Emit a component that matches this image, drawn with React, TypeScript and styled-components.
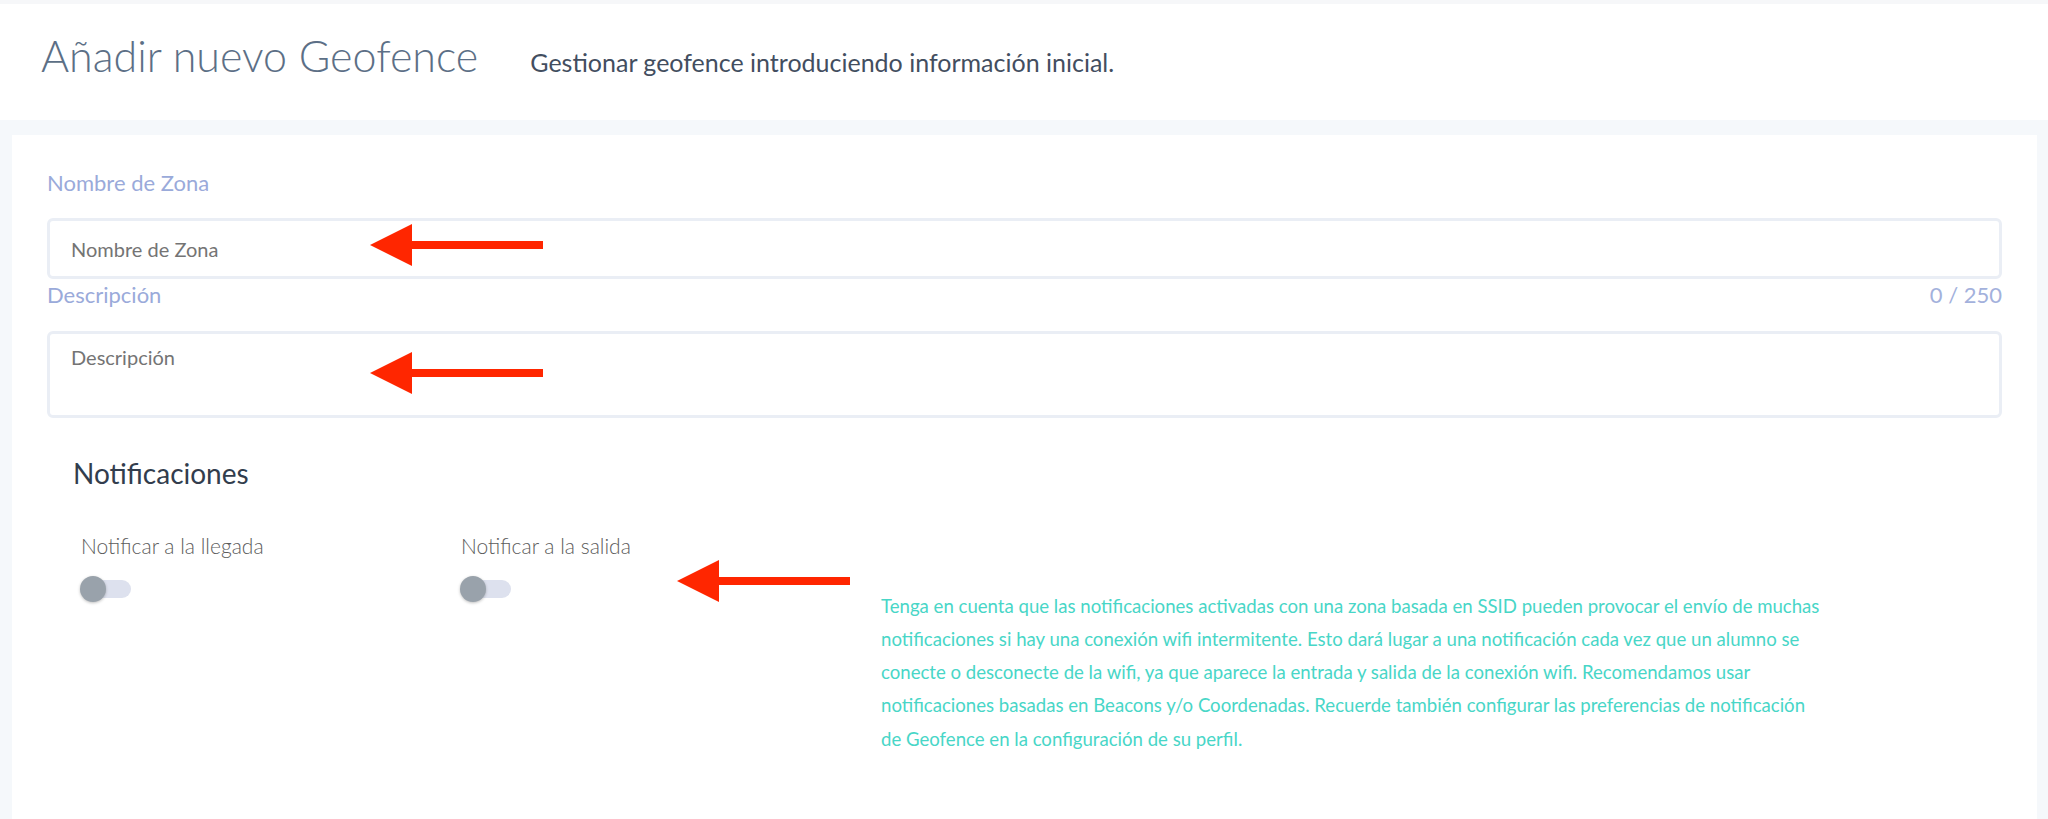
import React from "react";
import styled, { createGlobalStyle } from "styled-components";

const GlobalStyle = createGlobalStyle`
  html, body {
    margin: 0;
    padding: 0;
  }
  body {
    background: #f5f8fb;
    font-family: Lato, "Open Sans", sans-serif;
  }
  * {
    box-sizing: border-box;
  }
`;

const Page = styled.div`
  min-height: 100vh;
  display: flex;
  flex-direction: column;
`;

const Header = styled.header`
  height: 120px;
  border-top: 4px solid #f6f7f9;
  background: #ffffff;
  display: flex;
  align-items: baseline;
  padding: 30px 0 0 41px;
`;

const Title = styled.h1`
  margin: 0;
  font-size: 43px;
  line-height: 1;
  font-weight: 300;
  color: #5c6f86;
`;

const Subtitle = styled.span`
  margin-left: 52px;
  font-size: 25px;
  color: #434e5f;
`;

const Main = styled.main`
  flex: 1;
  display: flex;
  padding: 15px 11px 0 12px;
`;

const Card = styled.section`
  flex: 1;
  background: #ffffff;
  padding: 33px 35px 40px;
`;

const LabelRow = styled.div`
  display: flex;
  justify-content: space-between;
  font-size: 22px;
  line-height: 30px;
  color: #9aaada;
`;

const Counter = styled.span`
  color: #a3b1dc;
`;

const FieldBox = styled.div<{ $gap: number }>`
  position: relative;
  margin-top: ${(p) => p.$gap}px;
`;

const TextInput = styled.input`
  display: block;
  width: 100%;
  height: 61px;
  border: 3px solid #eaeef5;
  border-radius: 6px;
  padding: 0 21px;
  font-family: inherit;
  font-size: 20px;
  color: #444;
  outline: none;
  &::placeholder {
    color: #747474;
  }
`;

const TextArea = styled.textarea`
  display: block;
  width: 100%;
  height: 87px;
  border: 3px solid #eaeef5;
  border-radius: 6px;
  padding: 11px 21px;
  font-family: inherit;
  font-size: 20px;
  line-height: 1.2;
  color: #444;
  resize: none;
  outline: none;
  &::placeholder {
    color: #747474;
  }
`;

const SectionTitle = styled.h3`
  margin: 39px 0 0 26px;
  font-size: 28px;
  line-height: 1.2;
  font-weight: 400;
  color: #323d4d;
`;

const NotifyGrid = styled.div`
  position: relative;
  display: grid;
  grid-template-columns: 380px 420px 1fr;
  margin: 42px 0 0 34px;
`;

const Toggle = styled.div`
  display: flex;
  flex-direction: column;
  align-items: flex-start;
  gap: 18px;
`;

const ToggleLabel = styled.span`
  font-size: 21px;
  line-height: 1.2;
  font-weight: 300;
  color: #5c5c5c;
`;

const Track = styled.span`
  position: relative;
  display: block;
  width: 50px;
  height: 26px;
  &::before {
    content: "";
    position: absolute;
    left: 1px;
    right: 0;
    top: 4px;
    height: 18px;
    border-radius: 9px;
    background: #dde1ee;
  }
`;

const Thumb = styled.span`
  position: absolute;
  left: -1px;
  top: 0;
  width: 26px;
  height: 26px;
  border-radius: 50%;
  background: #99a2ab;
  box-shadow: 0 1px 3px rgba(0, 0, 0, 0.25);
`;

const Note = styled.p`
  margin: 57px 0 0;
  max-width: 1120px;
  font-size: 18.6px;
  line-height: 33.3px;
  color: #48d6c7;
`;

const ArrowMark = styled.svg<{ $left: number; $top: number }>`
  position: absolute;
  left: ${(p) => p.$left}px;
  top: ${(p) => p.$top}px;
  pointer-events: none;
`;

const Arrow = ({ left, top }: { left: number; top: number }) => (
  <ArrowMark $left={left} $top={top} width="173" height="42" viewBox="0 0 173 42">
    <polygon points="0,21 42,0 42,42" fill="#ff2600" />
    <rect x="40" y="17" width="133" height="8" fill="#ff2600" />
  </ArrowMark>
);

const Switch = () => (
  <Track>
    <Thumb />
  </Track>
);

export default function App() {
  return (
    <Page>
      <GlobalStyle />
      <Header>
        <Title>Añadir nuevo Geofence</Title>
        <Subtitle>Gestionar geofence introduciendo información inicial.</Subtitle>
      </Header>
      <Main>
        <Card>
          <LabelRow>
            <span>Nombre de Zona</span>
          </LabelRow>
          <FieldBox $gap={20}>
            <TextInput placeholder="Nombre de Zona" />
            <Arrow left={323} top={6} />
          </FieldBox>
          <FieldBox $gap={1}>
            <LabelRow>
              <span>Descripción</span>
              <Counter>0 / 250</Counter>
            </LabelRow>
          </FieldBox>
          <FieldBox $gap={21}>
            <TextArea placeholder="Descripción" />
            <Arrow left={323} top={21} />
          </FieldBox>
          <SectionTitle>Notificaciones</SectionTitle>
          <NotifyGrid>
            <Toggle>
              <ToggleLabel>Notificar a la llegada</ToggleLabel>
              <Switch />
            </Toggle>
            <Toggle>
              <ToggleLabel>Notificar a la salida</ToggleLabel>
              <Switch />
            </Toggle>
            <Note>
              Tenga en cuenta que las notificaciones activadas con una zona basada en SSID pueden provocar el
              envío de muchas
              <br />
              notificaciones si hay una conexión wifi intermitente. Esto dará lugar a una notificación cada vez
              que un alumno se
              <br />
              conecte o desconecte de la wifi, ya que aparece la entrada y salida de la conexión wifi.
              Recomendamos usar
              <br />
              notificaciones basadas en Beacons y/o Coordenadas. Recuerde también configurar las preferencias de
              notificación
              <br />
              de Geofence en la configuración de su perfil.
            </Note>
            <Arrow left={596} top={27} />
          </NotifyGrid>
        </Card>
      </Main>
    </Page>
  );
}
